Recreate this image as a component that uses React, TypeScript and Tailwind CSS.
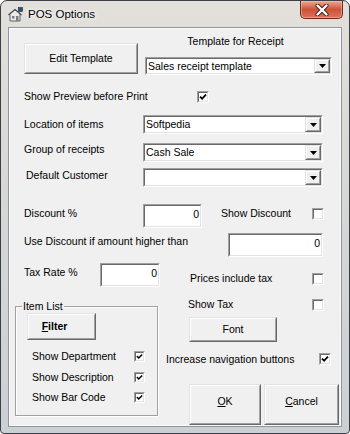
import React from "react";

const Label = ({ className = "", children }: { className?: string; children: React.ReactNode }) => (
  <div className={`h-[13px] leading-[13px] whitespace-nowrap shrink-0 ${className}`}>{children}</div>
);

const Sunken = ({ className = "", children }: { className?: string; children?: React.ReactNode }) => (
  <div className={`shrink-0 border border-t-[#a0a0a0] border-l-[#a0a0a0] border-b-white border-r-white ${className}`}>
    <div className="h-full w-full border border-t-[#696969] border-l-[#696969] border-b-[#e3e3e3] border-r-[#e3e3e3] bg-white overflow-hidden">
      {children}
    </div>
  </div>
);

const Raised = ({ className = "", innerClass = "", children }: { className?: string; innerClass?: string; children?: React.ReactNode }) => (
  <div className={`shrink-0 border border-t-[#e3e3e3] border-l-[#e3e3e3] border-b-[#696969] border-r-[#696969] ${className}`}>
    <div className={`h-full w-full border border-t-white border-l-white border-b-[#a0a0a0] border-r-[#a0a0a0] bg-[#f0f0f0] flex items-center justify-center ${innerClass}`}>
      {children}
    </div>
  </div>
);

const Combo = ({ className = "", value = "" }: { className?: string; value?: string }) => (
  <Sunken className={className}>
    <div className="flex h-full">
      <div className="flex-1 pl-[1px] leading-[13px] flex items-center whitespace-nowrap">{value}</div>
      <Raised className="w-[16px] h-full">
        <svg width="7" height="4" viewBox="0 0 7 4">
          <path d="M0 0H7L3.5 4Z" fill="#000" />
        </svg>
      </Raised>
    </div>
  </Sunken>
);

const NumBox = ({ className = "" }: { className?: string }) => (
  <Sunken className={className}>
    <div className="text-right pr-[1px] pt-[2px] leading-[13px]">0</div>
  </Sunken>
);

const Check = ({ checked = false, className = "", size = 12 }: { checked?: boolean; className?: string; size?: number }) => (
  <Sunken className={`${size === 12 ? "w-[12px] h-[12px]" : "w-[11px] h-[11px]"} ${className}`}>
    {checked && (
      <svg viewBox="0 0 8 8" className="w-full h-full">
        <path d="M1 3.6L3.1 5.7L7 1.6" stroke="#000" strokeWidth="1.7" fill="none" />
      </svg>
    )}
  </Sunken>
);

export default function App() {
  return (
    <div className="w-[350px] h-[434px] overflow-hidden bg-white">
      <div
        className="w-[350px] h-[434px] rounded-t-[7px] rounded-b-[4px] border border-[#3b4046] bg-linear-to-b from-[#e3e0db] via-[#d6d6d5] to-[#cbd0d5] flex flex-col text-black text-[10.5px] font-['Liberation_Sans',Arial,sans-serif]"
      >
        {/* Title bar */}
        <div className="h-[26px] flex items-start shrink-0">
          <svg width="15" height="15" viewBox="0 0 15 15" className="ml-[7px] mt-[6px]">
            <path d="M1 7.5L7 2.5L12 6.5V14H2V7.5Z" fill="#eceae6" stroke="#5d6065" strokeWidth="1" />
            <path d="M0.5 8L7 2.5L13.5 8" fill="none" stroke="#4a4d52" strokeWidth="1.2" />
            <rect x="4" y="9" width="2.5" height="2.5" fill="#7a7e84" />
            <rect x="8" y="9" width="2.5" height="5" fill="#7a7e84" />
            <rect x="10.5" y="0.5" width="4" height="4" fill="#2f4f7a" stroke="#1d2a3a" strokeWidth="0.6" />
          </svg>
          <div className="ml-[5px] mt-[6px] text-[11.5px] leading-[14px] text-black [text-shadow:0_0_6px_#fff,0_0_3px_#fff] font-['Liberation_Sans',Arial,sans-serif]">
            POS Options
          </div>
          <div className="ml-auto mr-[6px] w-[43px] h-[18px] rounded-b-[5px] border border-t-0 border-[#6a2a1f] bg-linear-to-b from-[#e9a893] via-[#cc5238] to-[#d8745a] shadow-[inset_0_0_0_1px_rgba(255,210,190,0.45)] flex items-center justify-center">
            <svg width="14" height="12" viewBox="0 0 14 12">
              <path d="M2.5 1.5L11.5 10.5M11.5 1.5L2.5 10.5" stroke="#3b1a14" strokeWidth="4" strokeLinecap="round" />
              <path d="M2.5 1.5L11.5 10.5M11.5 1.5L2.5 10.5" stroke="#ffffff" strokeWidth="2.4" strokeLinecap="round" />
            </svg>
          </div>
        </div>

        {/* Client area */}
        <div className="mx-[7px] w-[334px] h-[400px] shrink-0 border border-[#8d969e] shadow-[inset_0_0_0_1px_#fbfbfb] bg-[#f0f0f0] pt-[7px] flex flex-col">
          {/* Row 1 */}
          <div className="flex items-start">
            <Raised className="ml-[15px] mt-[8px] w-[114px] h-[31px]">
              <span className="leading-[13px]">Edit Template</span>
            </Raised>
            <div className="ml-[7px] w-[187px] flex flex-col">
              <Label className="text-center pr-[6px]">Template for Receipt</Label>
              <Combo className="mt-[9px] w-[187px] h-[18px]" value="Sales receipt template" />
            </div>
          </div>

          {/* Show preview */}
          <div className="flex items-start mt-[15px]">
            <Label className="ml-[15px] w-[173px]">Show Preview before Print</Label>
            <Check checked className="mt-[1px]" />
          </div>

          {/* Location */}
          <div className="flex items-start mt-[12px]">
            <Label className="ml-[15px] w-[119px] mt-[3px]">Location of items</Label>
            <Combo className="w-[180px] h-[19px]" value="Softpedia" />
          </div>

          {/* Group */}
          <div className="flex items-start mt-[9px]">
            <Label className="ml-[15px] w-[119px] mt-[0px]">Group of receipts</Label>
            <Combo className="w-[180px] h-[19px]" value="Cash Sale" />
          </div>

          {/* Default customer */}
          <div className="flex items-start mt-[6px]">
            <Label className="ml-[17px] w-[117px] mt-[1px]">Default Customer</Label>
            <Combo className="w-[180px] h-[19px]" value="" />
          </div>

          {/* Discount */}
          <div className="flex items-start mt-[17px]">
            <Label className="ml-[15px] w-[119px] mt-[3px]">Discount %</Label>
            <NumBox className="w-[59px] h-[24px]" />
            <Label className="ml-[19px] w-[91px] mt-[3px]">Show Discount</Label>
            <Check className="mt-[4px]" />
          </div>

          {/* Use discount */}
          <div className="flex items-start mt-[5px]">
            <Label className="ml-[15px] w-[204px] mt-[2px]">Use Discount if amount higher than</Label>
            <NumBox className="w-[95px] h-[24px]" />
          </div>

          {/* Bottom area */}
          <div className="flex items-start mt-[6px]">
            {/* Left column */}
            <div className="w-[155px] shrink-0 flex flex-col">
              <div className="flex items-start">
                <Label className="ml-[15px] w-[76px] mt-[3px]">Tax Rate %</Label>
                <NumBox className="w-[60px] h-[24px]" />
              </div>
              <div className="relative ml-[6px] mt-[19px] w-[143px] h-[110px] border border-[#a0a0a0] shadow-[inset_1px_1px_0_#fff,1px_1px_0_#fff] flex flex-col">
                <div className="absolute left-[6px] top-[-7px] px-[1px] bg-[#f0f0f0] h-[13px] leading-[13px] whitespace-nowrap">
                  Item List
                </div>
                <Raised className="ml-[11px] mt-[6px] w-[69px] h-[27px]" innerClass="pr-[14px]">
                  <span className="font-bold leading-[13px]">
                    <span className="underline underline-offset-[1px]">F</span>ilter
                  </span>
                </Raised>
                <div className="flex items-start mt-[10px]">
                  <Label className="ml-[16px] w-[102px]">Show Department</Label>
                  <Check checked size={11} className="mt-[1px]" />
                </div>
                <div className="flex items-start mt-[8px]">
                  <Label className="ml-[16px] w-[102px]">Show Description</Label>
                  <Check checked size={11} className="mt-[1px]" />
                </div>
                <div className="flex items-start mt-[7px]">
                  <Label className="ml-[16px] w-[102px]">Show Bar Code</Label>
                  <Check checked size={11} className="mt-[1px]" />
                </div>
              </div>
            </div>

            {/* Right column */}
            <div className="flex-1 flex flex-col">
              <div className="flex items-start mt-[9px]">
                <Label className="ml-[26px] w-[122px]">Prices include tax</Label>
                <Check className="mt-[1px]" />
              </div>
              <div className="flex items-start mt-[13px]">
                <Label className="ml-[24px] w-[124px]">Show Tax</Label>
                <Check className="mt-[1px]" />
              </div>
              <Raised className="ml-[25px] mt-[6px] w-[88px] h-[25px]">
                <span className="leading-[13px]">Font</span>
              </Raised>
              <div className="flex items-start mt-[11px]">
                <Label className="ml-[2px] w-[153px]">Increase navigation buttons</Label>
                <Check checked />
              </div>
              <div className="flex items-start mt-[18px]">
                <Raised className="ml-[25px] w-[72px] h-[41px]" innerClass="pb-[7px]">
                  <span className="leading-[13px]">
                    <span className="underline underline-offset-[1px]">O</span>K
                  </span>
                </Raised>
                <Raised className="ml-[3px] w-[75px] h-[41px]" innerClass="pb-[7px]">
                  <span className="leading-[13px]">
                    <span className="underline underline-offset-[1px]">C</span>ancel
                  </span>
                </Raised>
              </div>
            </div>
          </div>
        </div>
      </div>
    </div>
  );
}
